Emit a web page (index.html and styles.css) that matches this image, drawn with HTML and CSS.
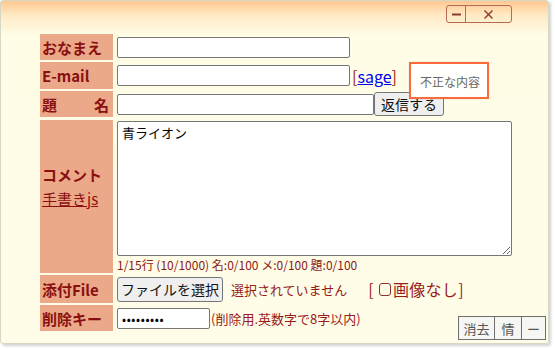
FILE: index.html
```html
<!DOCTYPE html>
<html lang="ja">
<head>
<meta charset="utf-8">
<link rel="stylesheet" href="styles.css">
</head>
<body>
<div class="window">
  <div class="titlebar">
    <div class="winbtns">
      <span class="wb min"><svg width="11" height="11" viewBox="0 0 11 11"><path d="M1 5.5H10" stroke="#8a3b2a" stroke-width="2"/></svg></span>
      <span class="wb close"><svg width="11" height="11" viewBox="0 0 11 11"><path d="M1.5 1.5L9.5 9.5M9.5 1.5L1.5 9.5" stroke="#8a3b2a" stroke-width="1.4"/></svg></span>
    </div>
  </div>
  <form class="form">
    <div class="label">おなまえ</div>
    <div class="cell"><input class="txt name" type="text"></div>

    <div class="label">E-mail</div>
    <div class="cell"><input class="txt name" type="text"><span class="br">[</span><a href="#" class="sage">sage</a><span class="br">]</span></div>

    <div class="label just"><span>題</span><span>名</span></div>
    <div class="cell"><input class="txt subj" type="text"><button type="button" class="btn reply">返信する</button></div>

    <div class="label comment"><div>コメント</div><a href="#" class="hand">手書きjs</a></div>
    <div class="cell col">
      <textarea class="area">青ライオン</textarea>
      <div class="count">1/15行 (10/1000) 名:0/100 メ:0/100 題:0/100</div>
    </div>

    <div class="label">添付File</div>
    <div class="cell"><button type="button" class="btn file">ファイルを選択</button><span class="nofile">選択されていません</span><span class="noimg">[<span class="cb"></span>画像なし]</span></div>

    <div class="label">削除キー</div>
    <div class="cell"><input class="txt key" type="text" value="•••••••••"><span class="note">(削除用.英数字で8字以内)</span></div>
  </form>
  <div class="tooltip">不正な内容</div>
  <div class="tools"><span class="tb">消去</span><span class="tb">情</span><span class="tb">ー</span></div>
</div>
</body>
</html>
```
FILE: styles.css
```css
* { box-sizing: border-box; }
html, body { margin: 0; padding: 0; background: #ffffff; }
body { width: 555px; height: 349px; overflow: hidden; font-family: "Noto Sans CJK JP", "Noto Sans", sans-serif; }

.window {
  position: relative;
  width: 549px;
  height: 344px;
  border: 1px solid #d6d8c6;
  border-radius: 3px;
  background: linear-gradient(#ffc891 0px, #ffe9c4 14px, #fffde6 34px, #fffde8 100%);
  box-shadow: 2px 2px 3px rgba(0,0,0,0.18);
}

.titlebar { height: 33px; display: flex; justify-content: flex-end; padding: 4px 36px 0 0; }
.winbtns { display: flex; height: 18px; border: 1px solid #b56a58; border-radius: 3px; overflow: hidden; }
.wb { display: flex; align-items: center; justify-content: center; }
.wb svg { display: block; }
.wb.min { width: 19px; border-right: 1px solid #b56a58; }
.wb.close { width: 45px; }

.form {
  display: grid;
  grid-template-columns: 73px 1fr;
  grid-template-rows: 26px 27px 26px 154px 28px 26px;
  column-gap: 4px;
  row-gap: 2px;
  margin-left: 39px;
}
.form > :nth-child(7), .form > :nth-child(8) { margin-top: 1px; }

.label {
  background: #eba98a;
  color: #8a1010;
  font-weight: bold;
  font-size: 15px;
  display: flex;
  align-items: center;
  padding-left: 2px;
  white-space: nowrap;
}
.label.just { justify-content: space-between; padding-right: 4px; }
.label.comment { flex-direction: column; align-items: flex-start; justify-content: center; padding-bottom: 17px; }
.label.comment div { line-height: 22px; }
.hand { color: #8a1010; font-weight: normal; font-size: 15px; letter-spacing: 0; line-height: 26px; }

.cell { display: flex; align-items: center; }
.cell.col { flex-direction: column; align-items: flex-start; justify-content: flex-start; }

.txt {
  height: 21px;
  border: 1px solid #767676;
  border-radius: 2px;
  background: #fff;
  padding: 0 4px;
  font-family: "Noto Sans CJK JP", sans-serif;
  font-size: 13px;
}
.txt.name { width: 233px; }
.txt.subj { width: 257px; }
.txt.key { width: 93px; font-size: 12px; letter-spacing: 0.6px; }

.br { color: #a02020; font-size: 16px; margin-left: 2px; line-height: 1; }
.br + .sage + .br { margin-left: 0; }
.sage { color: #0000ee; font-size: 16px; text-decoration: underline; line-height: 1; }

.btn {
  font-family: "Noto Sans CJK JP", sans-serif;
  border: 1px solid #767676;
  border-radius: 3px;
  background: #efefef;
  color: #111;
  padding: 0 4px;
  font-size: 14px;
}
.reply { height: 24px; width: 70px; margin-top: 0; padding: 0; }
.file { height: 25px; width: 106px; padding: 0; font-size: 14px; }

.area {
  margin-top: 1px;
  width: 395px;
  height: 136px;
  border: 1px solid #767676;
  border-radius: 2px;
  background: #fff;
  font-family: "Noto Sans CJK JP", sans-serif;
  font-size: 13px;
  padding: 1px 4px;
  resize: both;
}
.count { color: #8a1a1a; font-size: 12px; margin-top: 1px; line-height: 16px; }

.nofile { color: #9a1a1a; font-size: 13px; margin-left: 8px; }
.noimg { color: #9a1a1a; font-size: 16px; margin-left: 21px; display: inline-flex; align-items: center; letter-spacing: 0.3px; }
.cb { display: inline-block; width: 12px; height: 13px; border: 1px solid #8a3030; border-radius: 3px; margin: 0 2px 0 5px; }

.note { color: #9a1a1a; font-size: 13px; margin-left: 1px; }

.tooltip {
  position: absolute;
  left: 408px;
  top: 61px;
  width: 80px;
  height: 37px;
  border: 2px solid #ff6a3a;
  background: #fffffb;
  color: #666;
  font-size: 12px;
  padding: 9px 0 0 9px;
  box-shadow: 0 0 2px rgba(0,0,0,0.1);
}

.tools {
  position: absolute;
  right: 2px;
  bottom: 3px;
  display: flex;
  border: 1px solid #6e6e6e;
  background: #f6f6f2;
}
.tb {
  height: 22px;
  display: flex;
  align-items: center;
  justify-content: center;
  color: #555;
  font-size: 13px;
  border-left: 1px solid #6e6e6e;
}
.tb:first-child { border-left: none; width: 35px; }
.tb:nth-child(2) { width: 27px; }
.tb:nth-child(3) { width: 24px; }
```
